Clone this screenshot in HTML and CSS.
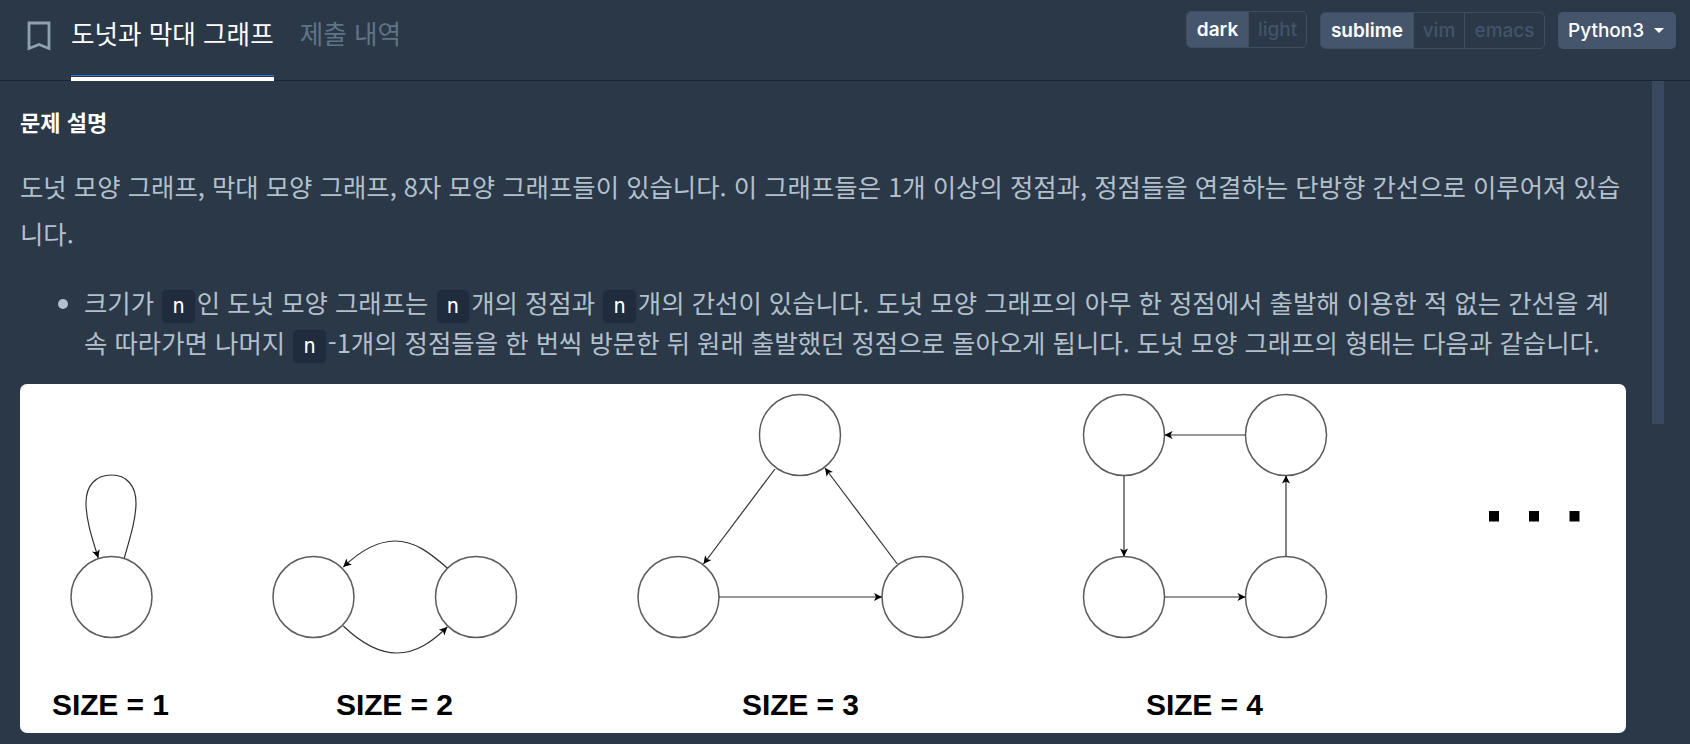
FILE: index.html
```html
<!DOCTYPE html>
<html lang="ko">
<head>
    <meta charset="UTF-8">
    <meta name="viewport" content="width=device-width, initial-scale=1.0">
    <title>도넛과 막대 그래프</title>
    <link rel="stylesheet" href="styles.css">
</head>
<body>
    <header class="topbar">
        <div class="tabs">
            <svg class="bookmark" width="24" height="30" viewBox="0 0 24 30" fill="none">
                <path d="M2 2H22V27.5L12 23.5L2 27.5Z" stroke="#8fa0b1" stroke-width="2.8"/>
            </svg>
            <a class="tab active" href="#">도넛과 막대 그래프</a>
            <a class="tab" href="#">제출 내역</a>
        </div>
        <div class="controls">
            <div class="toggle theme-toggle">
                <span class="seg on seg-dark">dark</span>
                <span class="seg seg-light">light</span>
            </div>
            <div class="toggle">
                <span class="seg on seg-sublime">sublime</span>
                <span class="seg seg-vim">vim</span>
                <span class="seg seg-emacs">emacs</span>
            </div>
            <button class="lang">Python3<span class="caret"></span></button>
        </div>
    </header>
    <main class="page">
        <article class="desc">
            <h2>문제 설명</h2>
            <p class="intro">도넛 모양 그래프, 막대 모양 그래프, 8자 모양 그래프들이 있습니다. 이 그래프들은 1개 이상의 정점과, 정점들을 연결하는 단방향 간선으로 이루어져 있습니다.</p>
            <ul>
                <li>크기가 <code>n</code>인 도넛 모양 그래프는 <code>n</code>개의 정점과 <code>n</code>개의 간선이 있습니다. 도넛 모양 그래프의 아무 한 정점에서 출발해 이용한 적 없는 간선을 계속 따라가면 나머지 <code>n</code>-1개의 정점들을 한 번씩 방문한 뒤 원래 출발했던 정점으로 돌아오게 됩니다. 도넛 모양 그래프의 형태는 다음과 같습니다.</li>
            </ul>
            <svg class="figure" width="1606" height="349" viewBox="20 384 1606 349">
                <defs>
                    <marker id="head" markerUnits="userSpaceOnUse" markerWidth="10" markerHeight="10" viewBox="-9 -5 10 10" refX="0" refY="0" orient="auto">
                        <path d="M0 0L-8 -4L-6 0L-8 4Z" fill="#000"/>
                    </marker>
                </defs>
                <g class="nodes">
                    <circle cx="111.5" cy="597" r="40.5"/>
                    <circle cx="313.5" cy="597" r="40.5"/>
                    <circle cx="476" cy="597" r="40.5"/>
                    <circle cx="800" cy="435" r="40.5"/>
                    <circle cx="678.5" cy="597" r="40.5"/>
                    <circle cx="922.5" cy="597" r="40.5"/>
                    <circle cx="1124" cy="435" r="40.5"/>
                    <circle cx="1286" cy="435" r="40.5"/>
                    <circle cx="1124" cy="597" r="40.5"/>
                    <circle cx="1286" cy="597" r="40.5"/>
                </g>
                <g class="edges">
                    <path marker-end="url(#head)" d="M124.3 558C131 535 136 518 136 503C136 485 126 475 111.7 475C96 475 86 485 86 503C86 520 92 538 98.3 558"/>
                    <path marker-end="url(#head)" d="M447.3 568C430 553 415 541 395 541C375 541 358 553 343.3 567"/>
                    <path marker-end="url(#head)" d="M343.3 626C360 642 377 653 397 653C417 653 433 641 447.3 627"/>
                    <path marker-end="url(#head)" d="M775 469L703.5 564"/>
                    <path marker-end="url(#head)" d="M897.3 564L825 468"/>
                    <path marker-end="url(#head)" d="M719 597H882"/>
                    <path marker-end="url(#head)" d="M1245.5 435H1164.5"/>
                    <path marker-end="url(#head)" d="M1124 475.5V556.5"/>
                    <path marker-end="url(#head)" d="M1164.5 597H1245.5"/>
                    <path marker-end="url(#head)" d="M1286 556.5V475.5"/>
                </g>
                <g class="dots">
                    <rect x="1489" y="511" width="10" height="10.5"/>
                    <rect x="1529" y="511" width="10" height="10.5"/>
                    <rect x="1569.5" y="511" width="10" height="10.5"/>
                </g>
                <g class="labels">
                    <text x="52" y="715">SIZE = 1</text>
                    <text x="336" y="715">SIZE = 2</text>
                    <text x="742" y="715">SIZE = 3</text>
                    <text x="1146" y="715">SIZE = 4</text>
                </g>
            </svg>
        </article>
        <div class="scroll-thumb"></div>
    </main>
</body>
</html>
```

FILE: styles.css
```css
* {
    box-sizing: border-box;
}

html, body {
    height: 100%;
}

body {
    margin: 0;
    overflow: hidden;
    background-color: #2b3848;
    color: #b2c0cc;
    font-family: "Noto Sans CJK KR", "Noto Sans", sans-serif;
}

.topbar {
    height: 81px;
    display: flex;
    justify-content: space-between;
    align-items: flex-start;
    border-bottom: 1px solid #1d2737;
    padding-left: 27px;
    padding-right: 14px;
}

.tabs {
    display: flex;
    height: 81px;
}

.bookmark {
    margin-top: 21px;
    margin-right: 20px;
}

.tab {
    height: 81px;
    margin-right: 26px;
    padding-top: 15px;
    font-size: 25.6px;
    line-height: 36px;
    color: #5f7486;
    text-decoration: none;
}

.tab.active {
    color: #ffffff;
    border-bottom: 4px solid #ffffff;
    position: relative;
}

.tab.active::after {
    content: "";
    position: absolute;
    left: 0;
    right: 0;
    bottom: -4px;
    height: 5px;
    border-top: 1px solid #2f6fd6;
}

.controls {
    display: flex;
    gap: 13px;
    padding-top: 12px;
    font-family: Inter, sans-serif;
    font-size: 19px;
    font-weight: 600;
}

.toggle {
    display: flex;
    height: 37px;
    border: 1px solid #3d4d62;
    border-radius: 5px;
    overflow: hidden;
}

.theme-toggle {
    margin-top: -1px;
}

.seg {
    display: flex;
    align-items: center;
    justify-content: center;
    color: #44546a;
    font-weight: 500;
    border-left: 1px solid #3d4d62;
}

.seg:first-child {
    border-left: 0;
}

.seg.on {
    background-color: #45566c;
    color: #ffffff;
    font-weight: 600;
}

.seg-dark { width: 61px; }
.seg-light { width: 58px; }
.seg-sublime { width: 92px; }
.seg-vim { width: 51px; }
.seg-emacs { width: 80px; }

.lang {
    width: 118px;
    height: 37px;
    display: flex;
    align-items: center;
    padding: 0 0 0 10px;
    border: none;
    border-radius: 5px;
    background-color: #45566c;
    color: #ffffff;
    font: inherit;
    font-weight: 500;
}

.caret {
    margin-left: 10px;
    border-left: 5px solid transparent;
    border-right: 5px solid transparent;
    border-top: 5px solid #ffffff;
}

.page {
    display: flex;
    align-items: flex-start;
    gap: 26px;
    padding-left: 20px;
}

.desc {
    width: 1606px;
    flex-shrink: 0;
}

.desc h2 {
    margin: 25px 0 0;
    font-size: 22px;
    line-height: 30px;
    font-weight: 700;
    color: #ffffff;
}

.intro {
    margin: 27px 0 0;
    font-size: 25.4px;
    line-height: 47px;
    word-break: break-all;
}

.desc ul {
    margin: 25px 0 0;
    padding-left: 64px;
    font-size: 25.4px;
    line-height: 40px;
}

.desc code {
    display: inline-block;
    height: 35px;
    padding: 0 10px;
    margin: -4px 1px -4px 0;
    border: 1px solid #29354a;
    border-radius: 6px;
    background-color: #202b3d;
    color: #ffffff;
    font-family: "DejaVu Sans Mono", monospace;
    font-size: 21px;
    line-height: 33px;
}

.figure {
    display: block;
    margin-top: 22px;
    background-color: #ffffff;
    border-radius: 7px;
}

.nodes circle {
    fill: none;
    stroke: #5c5c5c;
    stroke-width: 1.5;
}

.edges path {
    fill: none;
    stroke: #333333;
    stroke-width: 1.2;
}

.dots rect {
    fill: #000000;
}

.labels text {
    font-family: "Liberation Sans", sans-serif;
    font-size: 30px;
    font-weight: 700;
    fill: #000000;
    letter-spacing: -0.1px;
}

.scroll-thumb {
    width: 12px;
    height: 343px;
    flex-shrink: 0;
    background-color: #394a5f;
}
```
